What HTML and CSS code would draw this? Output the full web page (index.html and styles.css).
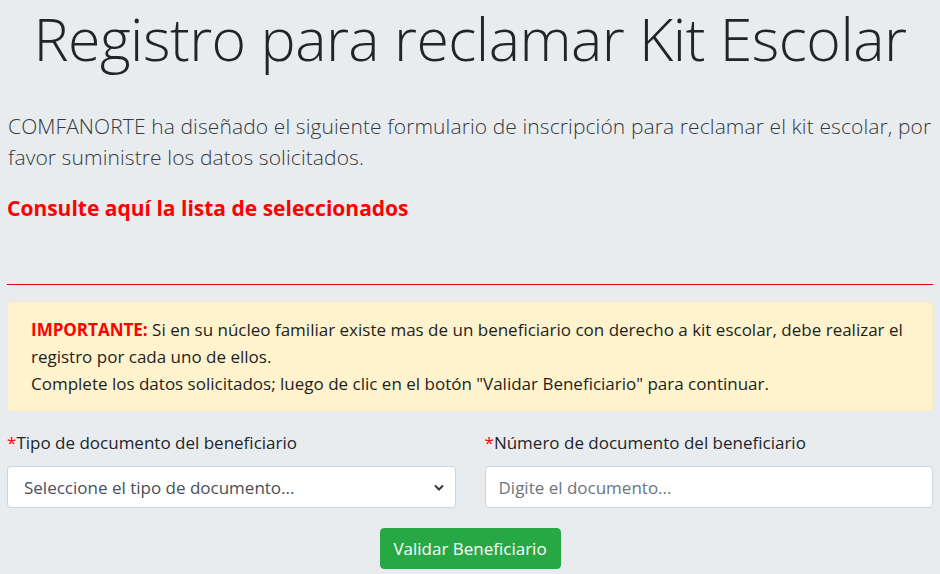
FILE: index.html
```html
<!DOCTYPE html>
<html lang="es">
<head>
<meta charset="utf-8">
<title>Registro Kit Escolar</title>
<link rel="stylesheet" href="styles.css">
</head>
<body>
<main class="page">
  <h1 class="title">Registro para reclamar Kit Escolar</h1>
  <p class="lead">COMFANORTE ha diseñado el siguiente formulario de inscripción para reclamar el kit escolar, por<br>favor suministre los datos solicitados.</p>
  <p class="list-link"><a href="#">Consulte aquí la lista de seleccionados</a></p>
  <hr class="divider">
  <div class="alert">
    <strong class="important">IMPORTANTE:</strong> Si en su núcleo familiar existe mas de un beneficiario con derecho a kit escolar, debe realizar el registro por cada uno de ellos.<br>
    Complete los datos solicitados; luego de clic en el botón "Validar Beneficiario" para continuar.
  </div>
  <form class="form">
    <div class="row">
      <div class="field">
        <label class="label"><span class="req">*</span>Tipo de documento del beneficiario</label>
        <div class="select-wrap">
          <select class="control select">
            <option>Seleccione el tipo de documento...</option>
          </select>
          <svg class="chev" width="10" height="7" viewBox="0 0 10 7"><path d="M1 1.5l4 4 4-4" fill="none" stroke="#343a40" stroke-width="2"/></svg>
        </div>
      </div>
      <div class="field">
        <label class="label"><span class="req">*</span>Número de documento del beneficiario</label>
        <input class="control" type="text" placeholder="Digite el documento...">
      </div>
    </div>
    <div class="actions">
      <button type="button" class="btn">Validar Beneficiario</button>
    </div>
  </form>
</main>
</body>
</html>
```
FILE: styles.css
```css
html, body {
  margin: 0;
  padding: 0;
}
body {
  background: #e9ecef;
  font-family: "Open Sans", "Noto Sans", sans-serif;
  color: #212529;
}
.page {
  padding: 0 7px;
}
.title {
  margin: -2px 0 0 0;
  font-weight: 300;
  font-size: 59px;
  line-height: 80px;
  text-align: center;
  color: #212529;
  letter-spacing: -0.5px;
}
.lead {
  margin: 33px 0 0 1px;
  font-size: 21px;
  line-height: 31px;
  font-weight: 300;
  color: #343a40;
  letter-spacing: 0.1px;
  white-space: nowrap;
}
.list-link {
  margin: 20px 0 0 0;
  font-size: 21px;
  line-height: 30px;
}
.list-link a {
  color: #ff0000;
  font-weight: 700;
  text-decoration: none;
}
.divider {
  margin: 61px 0 0 0;
  border: 0;
  border-top: 1px solid #e00000;
  height: 0;
}
.alert {
  margin-top: 17px;
  background: #fff3cd;
  border: 1px solid #ffeeba;
  border-radius: 4px;
  padding: 13px 23px 13px 23px;
  font-size: 17px;
  line-height: 27px;
  color: #1e1e1e;
}
.important {
  color: #ff0000;
}
.form {
  margin-top: 20px;
}
.row {
  display: grid;
  grid-template-columns: 1fr 1fr;
  column-gap: 29px;
}
.field {
  display: flex;
  flex-direction: column;
}
.label {
  font-size: 17px;
  line-height: 24px;
  margin-bottom: 11px;
  color: #212529;
}
.req {
  color: #ff0000;
}
.select-wrap {
  position: relative;
}
.control {
  box-sizing: border-box;
  width: 100%;
  height: 42px;
  border: 1px solid #ced4da;
  border-radius: 4px;
  background: #fff;
  padding: 0 13px;
  font-family: "Open Sans", "Noto Sans", sans-serif;
  font-size: 17px;
  color: #495057;
  outline: none;
}
.select {
  appearance: none;
  -webkit-appearance: none;
  padding-left: 16px;
}
.control::placeholder {
  color: #6c757d;
}
.chev {
  position: absolute;
  right: 12px;
  top: 18px;
  pointer-events: none;
}
.actions {
  display: flex;
  justify-content: center;
  margin-top: 20px;
}
.btn {
  background: #28a745;
  border: 1px solid #28a745;
  color: #fff;
  border-radius: 4px;
  font-family: "Open Sans", "Noto Sans", sans-serif;
  font-size: 17px;
  height: 41px;
  padding: 0;
  width: 181px;
}
```
